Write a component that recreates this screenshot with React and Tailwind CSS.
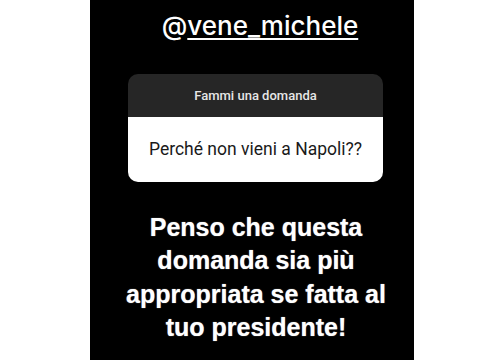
export default function App() {
  return (
    <div className="w-[480px] h-[360px] bg-white flex pl-[90px] overflow-hidden" style={{ fontFamily: "Roboto, 'Liberation Sans', sans-serif" }}>
      <div className="w-[324px] h-[360px] bg-black flex flex-col items-center pl-[8px]">
        <div className="mt-[9px] ml-[8px] text-[26px] leading-[34px] font-medium text-white whitespace-nowrap" style={{ fontFamily: "Inter, sans-serif" }}>
          @<span className="underline decoration-[2px] underline-offset-[3px]">vene_michele</span>
        </div>
        <div className="mt-[31px] w-[255px] rounded-[10px] overflow-hidden ml-[-1px]">
          <div className="h-[43px] bg-[#262626] flex items-center justify-center text-[13px] font-medium text-[#e6e6e6] whitespace-nowrap">
            Fammi una domanda
          </div>
          <div className="h-[65px] bg-white flex items-center justify-center text-[17.5px] text-[#1a1a1a] whitespace-nowrap">
            Perché non vieni a Napoli??
          </div>
        </div>
        <div className="mt-[29px] text-center text-white font-bold text-[25px] leading-[33.3px] whitespace-nowrap [text-shadow:0_0_1px_rgba(255,255,255,0.7)]" style={{ fontFamily: "'Liberation Sans', Arial, sans-serif" }}>
          Penso che questa<br />
          domanda sia più<br />
          appropriata se fatta al<br />
          tuo presidente!
        </div>
      </div>
    </div>
  );
}
